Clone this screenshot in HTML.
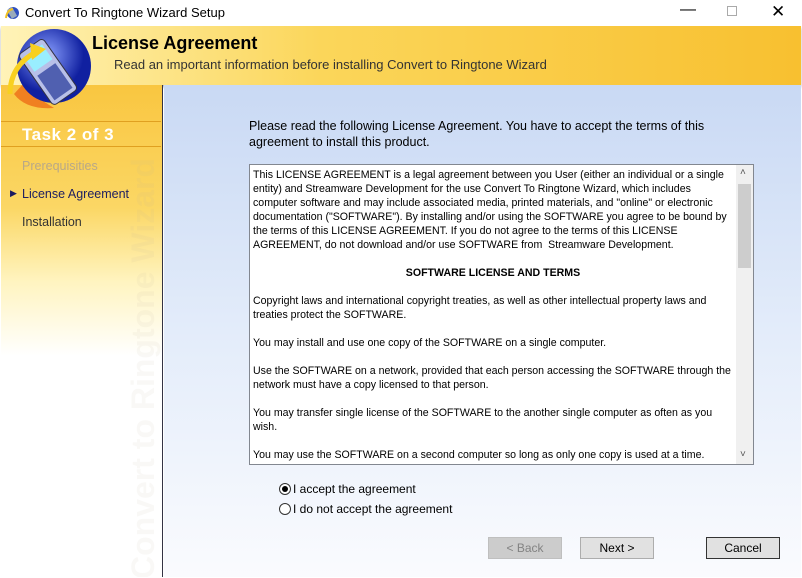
<!DOCTYPE html>
<html><head><meta charset="utf-8"><style>
*{margin:0;padding:0;box-sizing:border-box}
html,body{width:802px;height:578px;overflow:hidden}
body{font-family:"Liberation Sans",sans-serif;background:#fff;position:relative}
.title{position:absolute;left:0;top:0;width:802px;height:26px;background:#fff;font-size:13px;color:#000}
.title span{position:absolute;left:25px;top:5px}
.hdr{position:absolute;left:1px;top:26px;width:800px;height:59px;background:linear-gradient(90deg,#fff3b8 0%,#fbd65a 40%,#f8c030 100%);box-shadow:0 2px 3px rgba(0,0,0,.3)}
.hdr h1{position:absolute;left:91px;top:7px;font-size:18px;font-weight:bold;color:#000;z-index:3}
.hdr p{position:absolute;left:113px;top:31px;font-size:13px;color:#333}
.left{position:absolute;left:1px;top:85px;width:162px;height:492px;overflow:hidden;background:linear-gradient(180deg,#f9c640 0%,#fbd765 25%,#fff4c0 40%,#fff 55%,#fff 100%);border-right:1px solid #334}
.main{position:absolute;left:164px;top:85px;width:637px;height:492px;background:linear-gradient(180deg,#c9d9f4 0%,#e3ecfa 50%,#fafbfe 100%)}
.task{position:absolute;left:1px;top:121px;width:160px;height:26px;border-top:1px solid #e0a020;border-bottom:1px solid #e0a020;color:#fff;font-weight:bold;font-size:17px;padding:3px 0 0 21px;letter-spacing:.5px}
.nav{position:absolute;left:22px;font-size:12.5px}
.vert{position:absolute;left:124px;top:494px;transform-origin:0 0;transform:rotate(-90deg);font-size:32px;line-height:36px;font-weight:bold;color:rgba(190,180,160,.09);white-space:nowrap}
.intro{position:absolute;left:249px;top:118px;font-size:12.5px;line-height:16px;color:#000;width:500px}
.box{position:absolute;left:249px;top:164px;width:505px;height:301px;background:#fff;border:1px solid #828790;overflow:hidden}
.txt{position:absolute;left:3px;top:3px;width:480px;font-size:10.6px;line-height:14px;color:#000}
.txt p{margin-bottom:14px}
.sb{position:absolute;right:0;top:0;width:17px;height:299px;background:#f0f0f0}
.thumb{position:absolute;left:2px;top:19px;width:13px;height:84px;background:#cdcdcd}
.radio{position:absolute;left:279px;font-size:12px;color:#000}
.radio i{display:inline-block;width:12px;height:12px;border:1px solid #333;border-radius:50%;vertical-align:-2px;margin-right:2px;position:relative;background:#fff}
.radio i.on::after{content:"";position:absolute;left:2px;top:2px;width:6px;height:6px;border-radius:50%;background:#000}
.btn{position:absolute;top:537px;width:74px;height:22px;border:1px solid #adadad;background:#e1e1e1;font-size:12px;text-align:center;line-height:20px}
</style></head><body>
<div class="title">
<svg style="position:absolute;left:4px;top:5px" width="16" height="16"><circle cx="9" cy="8" r="6" fill="#3050c0"/><rect x="5" y="3" width="6" height="10" fill="#9ab" transform="rotate(-30 8 8)"/><path d="M2 13 Q3 5 9 4" stroke="#f0c020" stroke-width="2" fill="none"/></svg>
<span>Convert To Ringtone Wizard Setup</span>
<span style="left:680px;top:1px;font-size:16px">—</span>
<span style="left:727px;top:6px;width:10px;height:10px;border:1px solid #aaa"></span>
<span style="left:771px;top:2px;font-size:17px">✕</span>
</div>
<div class="left">
<div class="vert">Convert to Ringtone Wizard</div>
</div>
<svg style="position:absolute;left:4px;top:28px" width="88" height="82"><defs><radialGradient id="g" cx=".4" cy=".35"><stop offset="0" stop-color="#8aa0ff"/><stop offset="1" stop-color="#1020a0"/></radialGradient></defs><path d="M10 66 Q22 82 50 80 Q30 68 20 55Z" fill="#f08020"/><circle cx="50" cy="38" r="37" fill="url(#g)"/><g transform="rotate(-35 46 45)"><rect x="30" y="12" width="30" height="62" rx="4" fill="#b8c0e8" stroke="#334"/><rect x="34" y="17" width="22" height="18" fill="#9ef"/><rect x="34" y="40" width="22" height="30" fill="#5060b0"/></g><path d="M6 66 Q6 38 32 24" stroke="#f8d020" stroke-width="5" fill="none"/><path d="M26 15 L42 21 L28 32Z" fill="#f8d020"/></svg>
<div class="hdr" style="background:transparent;box-shadow:none"><h1>License Agreement</h1></div>
<div class="hdr" style="z-index:-1"><p>Read an important information before installing Convert to Ringtone Wizard</p></div>
<div class="task">Task 2 of 3</div>
<div class="nav" style="top:159px;color:#b8a888">Prerequisities</div>
<div class="nav" style="top:187px;color:#202060"><span style="position:absolute;left:-12px;top:1px;font-size:9px;color:#1a1a60">▶</span>License Agreement</div>
<div class="nav" style="top:215px;color:#333">Installation</div>
<div class="main"></div>
<div class="intro">Please read the following License Agreement. You have to accept the terms of this agreement to install this product.</div>
<div class="box"><div class="txt">
<p>This LICENSE AGREEMENT is a legal agreement between you User (either an individual or a single entity) and Streamware Development for the use Convert To Ringtone Wizard, which includes computer software and may include associated media, printed materials, and "online" or electronic documentation ("SOFTWARE"). By installing and/or using the SOFTWARE you agree to be bound by the terms of this LICENSE AGREEMENT. If you do not agree to the terms of this LICENSE AGREEMENT, do not download and/or use SOFTWARE from &nbsp;Streamware Development.</p>
<p style="text-align:center;font-weight:bold">SOFTWARE LICENSE AND TERMS</p>
<p>Copyright laws and international copyright treaties, as well as other intellectual property laws and treaties protect the SOFTWARE.</p>
<p>You may install and use one copy of the SOFTWARE on a single computer.</p>
<p>Use the SOFTWARE on a network, provided that each person accessing the SOFTWARE through the network must have a copy licensed to that person.</p>
<p>You may transfer single license of the SOFTWARE to the another single computer as often as you wish.</p>
<p>You may use the SOFTWARE on a second computer so long as only one copy is used at a time.</p>
</div><div class="sb"><div class="thumb"></div><span style="position:absolute;left:4px;top:2px;font-size:10px;color:#555">˄</span><span style="position:absolute;left:4px;top:284px;font-size:10px;color:#555">˅</span></div></div>
<div class="radio" style="top:482px"><i class="on"></i>I accept the agreement</div>
<div class="radio" style="top:502px"><i></i>I do not accept the agreement</div>
<div class="btn" style="left:488px;background:#cccccc;border-color:#bfbfbf;color:#838383">&lt; Back</div>
<div class="btn" style="left:580px">Next &gt;</div>
<div class="btn" style="left:706px;border-color:#333">Cancel</div>
</body></html>
